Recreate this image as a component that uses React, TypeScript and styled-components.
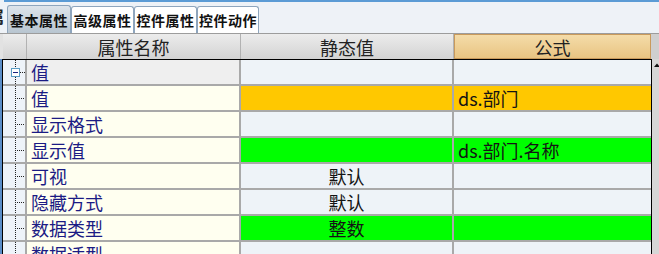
import React from 'react';
import styled, { createGlobalStyle } from 'styled-components';

const GlobalStyle = createGlobalStyle`
  html, body {
    margin: 0;
    padding: 0;
  }
  body {
    font-family: "Noto Sans CJK SC", "Noto Sans", sans-serif;
    background: #eef2f7;
  }
`;

const Page = styled.div`
  width: 659px;
  height: 254px;
  overflow: hidden;
  display: flex;
  flex-direction: column;
  background: #eef2f7;
`;

const TopLine = styled.div`
  flex: none;
  height: 2px;
  margin-left: 4px;
  background: #5b9bd5;
`;

const TabBar = styled.div`
  flex: none;
  height: 31px;
  display: flex;
  align-items: flex-end;
`;

const EdgeFragment = styled.div`
  width: 4px;
  height: 31px;
  margin-right: 3px;
  overflow: hidden;
  font-size: 16px;
  font-weight: 700;
  line-height: 28px;
  color: #222;

  span {
    display: block;
    margin-left: -12px;
  }
`;

const Tab = styled.div<{ $active?: boolean; $w: number }>`
  box-sizing: border-box;
  width: ${(p) => p.$w}px;
  height: ${(p) => (p.$active ? 28 : 27)}px;
  display: flex;
  align-items: center;
  justify-content: center;
  border: 1px solid #8ea5bd;
  border-bottom: none;
  border-radius: 3px 3px 0 0;
  background: ${(p) => (p.$active ? 'linear-gradient(#dde4eb, #b8c5d0)' : '#ffffff')};
  font-size: 14px;
  font-weight: 700;
  color: #111;
  letter-spacing: 0.5px;
`;

const HeaderRow = styled.div`
  flex: none;
  box-sizing: border-box;
  height: 26px;
  display: flex;
  border-top: 1px solid #9c9c9c;
  background: linear-gradient(#ececec, #d3d3d3);
`;

const HeaderLead = styled.div`
  width: 3px;
  background: #e2e2e2;
`;

const HeadCell = styled.div<{ $w: number; $accent?: boolean }>`
  box-sizing: border-box;
  width: ${(p) => p.$w}px;
  display: flex;
  align-items: center;
  justify-content: center;
  font-size: 18px;
  line-height: 24px;
  color: #222;
  border-right: 1px solid #b2b2b2;
  ${(p) =>
    p.$accent &&
    `
    border: 1px solid #c99a5c;
    background: linear-gradient(#f4dca9, #e9c482);
  `}
`;

const ScrollHead = styled.div`
  width: 8px;
  background: #cfcfcf;
`;

const BodyWrap = styled.div`
  flex: 1;
  min-height: 0;
  display: flex;
`;

const BlueEdge = styled.div`
  width: 2px;
  background: #5a8dc8;
`;

const Grid = styled.div`
  width: 648px;
  display: flex;
  flex-direction: column;
  overflow: hidden;
  border: 1px solid #000;
  border-bottom: none;
`;

const Row = styled.div`
  flex: none;
  box-sizing: border-box;
  height: 26px;
  display: flex;
  border-bottom: 2px solid #a9a9a9;
`;

const Cell = styled.div<{ $w: number; $bg: string; $center?: boolean; $navy?: boolean; $last?: boolean }>`
  box-sizing: border-box;
  width: ${(p) => p.$w}px;
  height: 24px;
  display: flex;
  align-items: center;
  justify-content: ${(p) => (p.$center ? 'center' : 'flex-start')};
  padding-left: ${(p) => (p.$center ? 0 : 4)}px;
  background: ${(p) => p.$bg};
  border-right: ${(p) => (p.$last ? 'none' : '2px solid #a9a9a9')};
  font-size: 18px;
  line-height: 24px;
  white-space: nowrap;
  color: ${(p) => (p.$navy ? '#1b1b84' : '#141414')};
`;

const TreeCell = styled.div`
  box-sizing: border-box;
  width: 24px;
  height: 24px;
  background: #eef3f9;
  border-right: 2px solid #a9a9a9;

  svg {
    display: block;
  }
`;

const Scroll = styled.div`
  width: 7px;
  background: #d6d6d6;

  svg {
    display: block;
    margin-top: 3px;
  }
`;

type Prop = {
  name: string;
  group?: boolean;
  value?: string;
  formula?: string;
  fill?: string;
};

const LIGHT = '#eef3f8';
const ORANGE = '#ffc800';
const GREEN = '#00ff00';

const props: Prop[] = [
  { name: '值', group: true },
  { name: '值', formula: 'ds.部门', fill: ORANGE },
  { name: '显示格式' },
  { name: '显示值', formula: 'ds.部门.名称', fill: GREEN },
  { name: '可视', value: '默认' },
  { name: '隐藏方式', value: '默认' },
  { name: '数据类型', value: '整数', fill: GREEN },
  { name: '数据适型' },
];

const TreeMark = ({ group }: { group?: boolean }) => (
  <svg width="22" height="24" viewBox="0 0 22 24">
    {group ? (
      <>
        <line x1="12.5" y1="0" x2="12.5" y2="8" stroke="#222" strokeDasharray="1 1" />
        <line x1="12.5" y1="17" x2="12.5" y2="24" stroke="#222" strokeDasharray="1 1" />
        <rect x="8.5" y="8.5" width="8" height="8" fill="#fff" stroke="#5a9cc4" />
        <line x1="10" y1="12.5" x2="15" y2="12.5" stroke="#1b237e" />
        <line x1="17" y1="12.5" x2="22" y2="12.5" stroke="#222" strokeDasharray="1 1" />
      </>
    ) : (
      <>
        <line x1="12.5" y1="0" x2="12.5" y2="24" stroke="#222" strokeDasharray="1 1" />
        <line x1="14" y1="12.5" x2="22" y2="12.5" stroke="#222" strokeDasharray="1 1" />
      </>
    )}
  </svg>
);

const App: React.FC = () => {
  return (
    <Page>
      <GlobalStyle />
      <TopLine />
      <TabBar>
        <EdgeFragment>
          <span>属</span>
        </EdgeFragment>
        <Tab $active $w={64}>基本属性</Tab>
        <Tab $w={63}>高级属性</Tab>
        <Tab $w={63}>控件属性</Tab>
        <Tab $w={62}>控件动作</Tab>
      </TabBar>
      <HeaderRow>
        <HeaderLead />
        <HeadCell $w={24} />
        <HeadCell $w={214}>属性名称</HeadCell>
        <HeadCell $w={213}>静态值</HeadCell>
        <HeadCell $w={197} $accent>
          公式
        </HeadCell>
        <ScrollHead />
      </HeaderRow>
      <BodyWrap>
        <BlueEdge />
        <Grid>
          {props.map((p, i) => (
            <Row key={i}>
              <TreeCell>
                <TreeMark group={p.group} />
              </TreeCell>
              <Cell $w={214} $bg={p.group ? '#efefef' : '#fffff0'} $navy>
                {p.name}
              </Cell>
              <Cell $w={213} $bg={p.fill ?? LIGHT} $center>
                {p.value}
              </Cell>
              <Cell $w={197} $bg={p.fill ?? LIGHT} $last>
                {p.formula}
              </Cell>
            </Row>
          ))}
        </Grid>
        <Scroll>
          <svg width="7" height="6" viewBox="0 0 7 6">
            <path d="M2 5 L5 1.5 L8 5 Z" fill="#111" />
          </svg>
        </Scroll>
      </BodyWrap>
    </Page>
  );
};

export default App;
